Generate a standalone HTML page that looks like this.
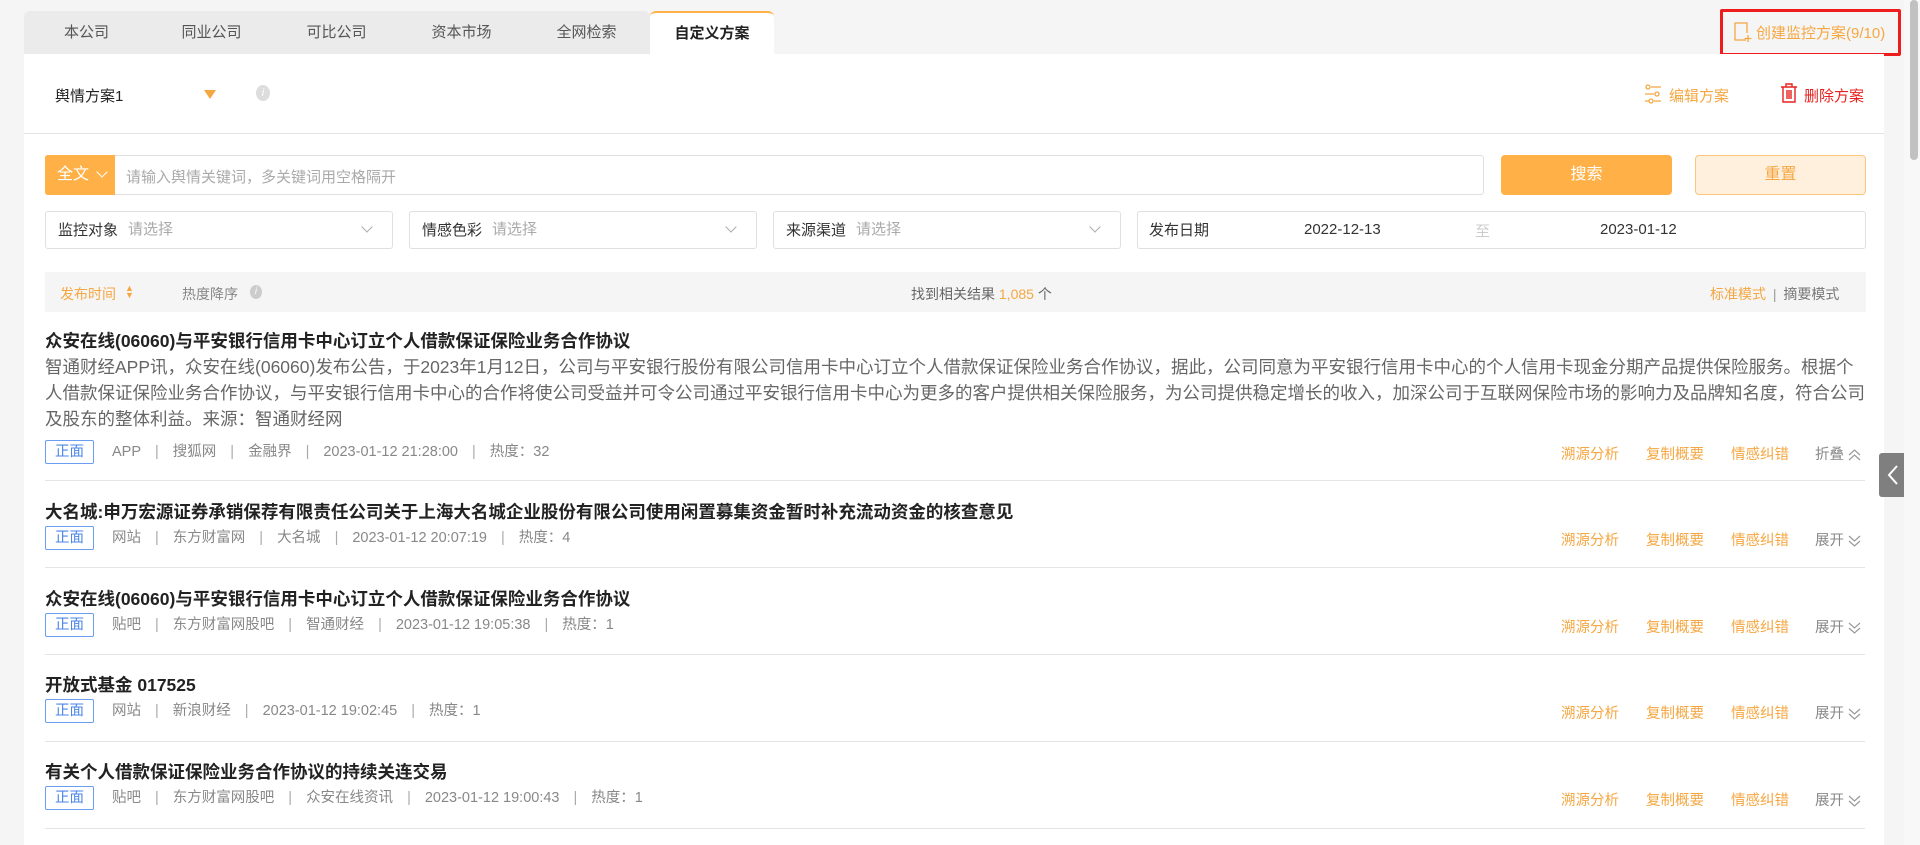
<!DOCTYPE html>
<html><head><meta charset="utf-8">
<style>
*{margin:0;padding:0;box-sizing:border-box}
body{width:1920px;height:845px;overflow:hidden;background:#f5f5f5;font-family:"Liberation Sans","Noto Sans CJK SC",sans-serif;position:relative;color:#333}
.a{position:absolute;white-space:nowrap}
.tabs{left:24px;top:11px;height:43px;width:626px;background:#ebebeb;border-radius:6px 6px 0 0}
.tab{position:absolute;top:11px;height:43px;width:125px;text-align:center;line-height:43px;font-size:15px;color:#555}
.panel{left:24px;top:54px;width:1860px;height:791px;background:#fff}
.box{position:absolute;border:1px solid #e0e0e0;border-radius:3px;background:#fff}
.lbl{font-size:15px;color:#333}
.ph{font-size:15px;color:#aaa}
.chev{position:absolute;width:8px;height:8px;border-right:1px solid #aaa;border-bottom:1px solid #aaa;transform:rotate(45deg)}
.title{font-size:17.5px;font-weight:bold;color:#222}
.meta{font-size:14.5px;color:#888}
.meta span.s{color:#aaa;margin:0 14px}
.tag{display:inline-block;border:1px solid #6a9ef0;color:#4a86e8;border-radius:2px;width:49px;height:24px;line-height:22px;text-align:center;font-size:14.5px;margin-right:18px;vertical-align:middle}
.acts{font-size:14.5px;color:#f5a742}
.div{position:absolute;left:45px;width:1820px;height:1px;background:#e4e4e4}
.dc{display:inline-block;vertical-align:middle;margin-left:4px}
</style></head><body>
<div class="a tabs"></div>
<div class="tab" style="left:24px">本公司</div>
<div class="tab" style="left:149px">同业公司</div>
<div class="tab" style="left:274px">可比公司</div>
<div class="tab" style="left:399px">资本市场</div>
<div class="tab" style="left:524px">全网检索</div>
<div class="tab" style="left:650px;width:124px;background:#fff;border-top:2px solid #ffb347;border-radius:6px 6px 0 0;color:#222;font-weight:bold;line-height:41px">自定义方案</div>

<div class="a" style="left:1720px;top:9px;width:181px;height:47px;border:3px solid #ee1c1c;border-radius:2px"></div>
<svg class="a" style="left:1733px;top:21px" width="20" height="22" viewBox="0 0 20 22"><path d="M13 19H2V2h12v10" fill="none" stroke="#f5a742" stroke-width="1.3"/><path d="M15 14v7M11.5 17.5h7" stroke="#f5a742" stroke-width="1.3"/></svg>
<div class="a" style="left:1756px;top:22px;font-size:15px;color:#f5a742">创建监控方案(9/10)</div>

<div class="a panel"></div>
<div class="a" style="left:55px;top:85px;font-size:15px;color:#222">舆情方案1</div>
<div class="a" style="left:204px;top:90px;width:0;height:0;border-left:6px solid transparent;border-right:6px solid transparent;border-top:9px solid #f5a742"></div>
<div class="a" style="left:256px;top:85px;width:14px;height:16px;border-radius:50%;background:#ddd;color:#fff;font-size:11px;text-align:center;line-height:16px;font-style:italic">i</div>
<svg class="a" style="left:1644px;top:84px" width="18" height="20" viewBox="0 0 18 20"><g fill="none" stroke="#f5a742" stroke-width="1.3"><circle cx="4" cy="3" r="2"/><path d="M7 3h10M1 10h9M1 17h4M10 17h7"/><circle cx="13" cy="10" r="2"/><circle cx="7" cy="17" r="2"/></g></svg>
<div class="a" style="left:1669px;top:85px;font-size:15px;color:#f5a742">编辑方案</div>
<svg class="a" style="left:1780px;top:82px" width="18" height="22" viewBox="0 0 18 22"><g fill="none" stroke="#e8201f" stroke-width="1.4"><path d="M1 5h16M6 5V2h6v3M3 5v15h12V5M7 8v9M9 8v9M11 8v9"/></g></svg>
<div class="a" style="left:1804px;top:85px;font-size:15px;color:#e8201f">删除方案</div>
<div class="a" style="left:24px;top:133px;width:1860px;height:1px;background:#e4e4e4"></div>

<div class="box" style="left:45px;top:155px;width:1439px;height:40px"></div>
<div class="a" style="left:45px;top:155px;width:70px;height:40px;background:#ffb047;border-radius:3px 0 0 3px;color:#fff;font-size:16px;line-height:40px;padding-left:12px">全文</div>
<div class="chev" style="left:98px;top:168px;border-color:#fff"></div>
<div class="a ph" style="left:126px;top:166px">请输入舆情关键词，多关键词用空格隔开</div>
<div class="a" style="left:1501px;top:155px;width:171px;height:40px;background:#ffb047;border-radius:4px;color:#fff;font-size:16px;text-align:center;line-height:40px">搜索</div>
<div class="a" style="left:1695px;top:155px;width:171px;height:40px;background:#fff0de;border:1px solid #ffc57a;border-radius:4px;color:#f5a742;font-size:16px;text-align:center;line-height:38px">重置</div>

<div class="box" style="left:45px;top:211px;width:348px;height:38px"></div>
<div class="a lbl" style="left:58px;top:219px">监控对象</div><div class="a ph" style="left:128px;top:218px">请选择</div><div class="chev" style="left:363px;top:223px"></div>
<div class="box" style="left:409px;top:211px;width:348px;height:38px"></div>
<div class="a lbl" style="left:422px;top:219px">情感色彩</div><div class="a ph" style="left:492px;top:218px">请选择</div><div class="chev" style="left:727px;top:223px"></div>
<div class="box" style="left:773px;top:211px;width:348px;height:38px"></div>
<div class="a lbl" style="left:786px;top:219px">来源渠道</div><div class="a ph" style="left:856px;top:218px">请选择</div><div class="chev" style="left:1091px;top:223px"></div>
<div class="box" style="left:1137px;top:211px;width:729px;height:38px"></div>
<div class="a lbl" style="left:1149px;top:219px">发布日期</div>
<div class="a lbl" style="left:1304px;top:221px">2022-12-13</div>
<div class="a ph" style="left:1475px;top:220px;color:#ccc">至</div>
<div class="a lbl" style="left:1600px;top:221px">2023-01-12</div>

<div class="a" style="left:45px;top:272px;width:1821px;height:40px;background:#f5f5f5"></div>
<div class="a" style="left:60px;top:284px;font-size:14px;color:#f5a742">发布时间</div>
<div class="a" style="left:125px;top:285px;font-size:9px;color:#f5a742;line-height:7px">▲<br>▼</div>
<div class="a" style="left:182px;top:284px;font-size:14px;color:#888">热度降序</div>
<div class="a" style="left:250px;top:285px;width:12px;height:14px;border-radius:50%;background:#ccc;color:#fff;font-size:10px;text-align:center;line-height:14px;font-style:italic">i</div>
<div class="a" style="left:911px;top:284px;font-size:14px;color:#666">找到相关结果 <span style="color:#f5a742">1,085</span> 个</div>
<div class="a" style="left:1710px;top:284px;font-size:14px;color:#f5a742">标准模式 <span style="color:#999;margin:0 3px">|</span> <span style="color:#777">摘要模式</span></div>

<!-- item 1 -->
<div class="a title" style="left:45px;top:328px">众安在线(06060)与平安银行信用卡中心订立个人借款保证保险业务合作协议</div>
<div class="a" style="left:45px;top:354px;width:1822px;white-space:normal;font-size:17.5px;line-height:26px;color:#666">智通财经APP讯，众安在线(06060)发布公告，于2023年1月12日，公司与平安银行股份有限公司信用卡中心订立个人借款保证保险业务合作协议，据此，公司同意为平安银行信用卡中心的个人信用卡现金分期产品提供保险服务。根据个人借款保证保险业务合作协议，与平安银行信用卡中心的合作将使公司受益并可令公司通过平安银行信用卡中心为更多的客户提供相关保险服务，为公司提供稳定增长的收入，加深公司于互联网保险市场的影响力及品牌知名度，符合公司及股东的整体利益。来源：智通财经网</div>
<div class="a meta" style="left:45px;top:440px;line-height:24px"><span class="tag">正面</span>APP<span class="s">|</span>搜狐网<span class="s">|</span>金融界<span class="s">|</span>2023-01-12 21:28:00<span class="s">|</span>热度：32</div>
<div class="a acts" style="left:1561px;top:443px">溯源分析</div><div class="a acts" style="left:1646px;top:443px">复制概要</div><div class="a acts" style="left:1731px;top:443px">情感纠错</div><div class="a acts" style="left:1815px;top:443px;color:#888">折叠<svg class="dc" width="13" height="12" viewBox="0 0 13 12"><path d="M1 6l5.5-5 5.5 5M1 11l5.5-5 5.5 5" fill="none" stroke="#999" stroke-width="1.2"/></svg></div>
<div class="div" style="top:480px"></div>

<!-- item 2 -->
<div class="a title" style="left:45px;top:499px">大名城:申万宏源证券承销保荐有限责任公司关于上海大名城企业股份有限公司使用闲置募集资金暂时补充流动资金的核查意见</div>
<div class="a meta" style="left:45px;top:526px;line-height:24px"><span class="tag">正面</span>网站<span class="s">|</span>东方财富网<span class="s">|</span>大名城<span class="s">|</span>2023-01-12 20:07:19<span class="s">|</span>热度：4</div>
<div class="a acts" style="left:1561px;top:529px">溯源分析</div><div class="a acts" style="left:1646px;top:529px">复制概要</div><div class="a acts" style="left:1731px;top:529px">情感纠错</div><div class="a acts" style="left:1815px;top:529px;color:#888">展开<svg class="dc" width="13" height="12" viewBox="0 0 13 12"><path d="M1 1l5.5 5 5.5-5M1 6l5.5 5 5.5-5" fill="none" stroke="#999" stroke-width="1.2"/></svg></div>
<div class="div" style="top:567px"></div>

<!-- item 3 -->
<div class="a title" style="left:45px;top:586px">众安在线(06060)与平安银行信用卡中心订立个人借款保证保险业务合作协议</div>
<div class="a meta" style="left:45px;top:613px;line-height:24px"><span class="tag">正面</span>贴吧<span class="s">|</span>东方财富网股吧<span class="s">|</span>智通财经<span class="s">|</span>2023-01-12 19:05:38<span class="s">|</span>热度：1</div>
<div class="a acts" style="left:1561px;top:616px">溯源分析</div><div class="a acts" style="left:1646px;top:616px">复制概要</div><div class="a acts" style="left:1731px;top:616px">情感纠错</div><div class="a acts" style="left:1815px;top:616px;color:#888">展开<svg class="dc" width="13" height="12" viewBox="0 0 13 12"><path d="M1 1l5.5 5 5.5-5M1 6l5.5 5 5.5-5" fill="none" stroke="#999" stroke-width="1.2"/></svg></div>
<div class="div" style="top:654px"></div>

<!-- item 4 -->
<div class="a title" style="left:45px;top:672px">开放式基金 017525</div>
<div class="a meta" style="left:45px;top:699px;line-height:24px"><span class="tag">正面</span>网站<span class="s">|</span>新浪财经<span class="s">|</span>2023-01-12 19:02:45<span class="s">|</span>热度：1</div>
<div class="a acts" style="left:1561px;top:702px">溯源分析</div><div class="a acts" style="left:1646px;top:702px">复制概要</div><div class="a acts" style="left:1731px;top:702px">情感纠错</div><div class="a acts" style="left:1815px;top:702px;color:#888">展开<svg class="dc" width="13" height="12" viewBox="0 0 13 12"><path d="M1 1l5.5 5 5.5-5M1 6l5.5 5 5.5-5" fill="none" stroke="#999" stroke-width="1.2"/></svg></div>
<div class="div" style="top:741px"></div>

<!-- item 5 -->
<div class="a title" style="left:45px;top:759px">有关个人借款保证保险业务合作协议的持续关连交易</div>
<div class="a meta" style="left:45px;top:786px;line-height:24px"><span class="tag">正面</span>贴吧<span class="s">|</span>东方财富网股吧<span class="s">|</span>众安在线资讯<span class="s">|</span>2023-01-12 19:00:43<span class="s">|</span>热度：1</div>
<div class="a acts" style="left:1561px;top:789px">溯源分析</div><div class="a acts" style="left:1646px;top:789px">复制概要</div><div class="a acts" style="left:1731px;top:789px">情感纠错</div><div class="a acts" style="left:1815px;top:789px;color:#888">展开<svg class="dc" width="13" height="12" viewBox="0 0 13 12"><path d="M1 1l5.5 5 5.5-5M1 6l5.5 5 5.5-5" fill="none" stroke="#999" stroke-width="1.2"/></svg></div>
<div class="div" style="top:828px"></div>

<!-- side tab -->
<div class="a" style="left:1879px;top:453px;width:31px;height:44px;background:#7f7f7f;border-radius:3px 0 0 3px"></div>
<svg class="a" style="left:1886px;top:464px" width="14" height="22" viewBox="0 0 14 22"><path d="M11 2L3 11l8 9" fill="none" stroke="#fff" stroke-width="2"/></svg>
<!-- scrollbar -->
<div class="a" style="left:1904px;top:0;width:16px;height:845px;background:#f8f8f8"></div>
<div class="a" style="left:1910px;top:0;width:8px;height:160px;background:#c1c1c1;border-radius:4px"></div>
</body></html>
